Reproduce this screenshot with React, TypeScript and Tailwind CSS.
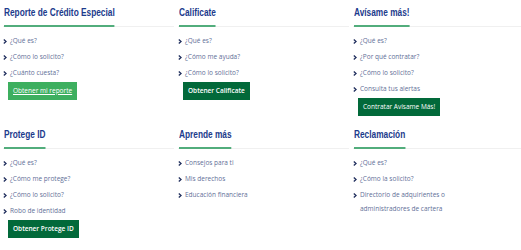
const sections = [
  {
    title: 'Reporte de Crédito Especial',
    items: ['¿Qué es?', '¿Cómo lo solicito?', '¿Cuánto cuesta?'],
    button: 'Obtener mi reporte',
    light: true,
  },
  {
    title: 'Calificate',
    items: ['¿Qué es?', '¿Cómo me ayuda?', '¿Cómo lo solicito?'],
    button: 'Obtener Calificate',
  },
  {
    title: 'Avísame más!',
    items: ['¿Qué es?', '¿Por qué contratar?', '¿Cómo lo solicito?', 'Consulta tus alertas'],
    button: 'Contratar Avísame Más!',
    regular: true,
  },
  {
    title: 'Protege ID',
    items: ['¿Qué es?', '¿Cómo me protege?', '¿Cómo lo solicito?', 'Robo de identidad'],
    button: 'Obtener Protege ID',
  },
  {
    title: 'Aprende más',
    items: ['Consejos para ti', 'Mis derechos', 'Educación financiera'],
  },
  {
    title: 'Reclamación',
    items: ['¿Qué es?', '¿Cómo la solicito?', 'Directorio de adquirientes o administradores de cartera'],
  },
]

type Section = {
  title: string
  items: string[]
  button?: string
  light?: boolean
  regular?: boolean
}

function Chevron() {
  return (
    <svg width="4" height="5" viewBox="0 0 4 5" className="mt-[5px] shrink-0">
      <path d="M0.8 0.6 L3 2.5 L0.8 4.4" fill="none" stroke="#1f2d5c" strokeWidth="1.3" />
    </svg>
  )
}

function Column({ section }: { section: Section }) {
  return (
    <div className="w-[175px] shrink-0 pr-[4px]">
      <div className="flex border-b border-[#f0f0f0] pl-[1px]">
        {/* narrow bold heading: no condensed face installed, so squeeze Liberation Sans */}
        <h3 className="-mb-px origin-left scale-x-[0.83] whitespace-nowrap border-b-2 border-[#52ad7c] pb-[6px] text-[10px] font-bold leading-[12px] text-[#1c3b8c] [font-family:'Liberation_Sans',Arial,sans-serif]">
          {section.title}
        </h3>
      </div>
      <ul className="mt-[7px]">
        {section.items.map((item) => (
          <li key={item} className="mb-[2px] flex gap-[3px] text-[6.5px] leading-[14px] text-[#5f6f98]">
            <Chevron />
            <span className="max-w-[88px]">{item}</span>
          </li>
        ))}
      </ul>
      {section.button && (
        <div className="ml-[5px] flex">
          <button
            type="button"
            className={`h-[18px] px-[5px] text-[6.5px] leading-none text-white ${
              section.light ? 'bg-[#3daf5f] underline' : 'bg-[#02693a]'
            } ${section.regular || section.light ? 'font-normal' : 'font-semibold'}`}
          >
            {section.button}
          </button>
        </div>
      )}
    </div>
  )
}

export default function App() {
  return (
    <div className="h-[250px] w-[521px] overflow-hidden bg-white pl-[3px] pt-[7px] [font-family:'Open_Sans',sans-serif]">
      <div className="flex">
        {sections.slice(0, 3).map((s) => (
          <Column key={s.title} section={s} />
        ))}
      </div>
      <div className="mt-[13px] flex">
        {sections.slice(3).map((s) => (
          <Column key={s.title} section={s} />
        ))}
      </div>
    </div>
  )
}
